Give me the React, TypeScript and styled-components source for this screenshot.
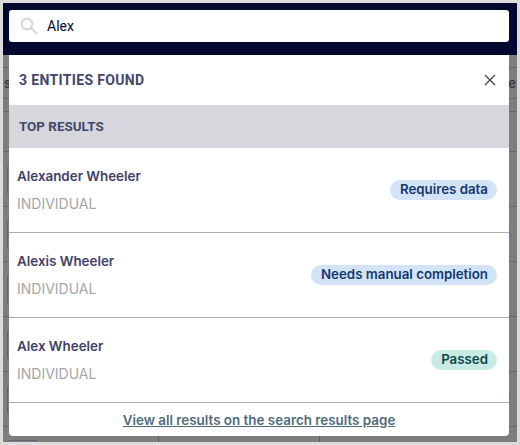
import React from 'react';
import styled, { createGlobalStyle } from 'styled-components';

type Tone = 'info' | 'success';

const results: { name: string; type: string; status: string; tone: Tone }[] = [
  { name: 'Alexander Wheeler', type: 'INDIVIDUAL', status: 'Requires data', tone: 'info' },
  { name: 'Alexis Wheeler', type: 'INDIVIDUAL', status: 'Needs manual completion', tone: 'info' },
  { name: 'Alex Wheeler', type: 'INDIVIDUAL', status: 'Passed', tone: 'success' },
];

// the table that sits dimmed behind the search panel
const tableRows: { height: number; text?: boolean; chip?: boolean; badge?: boolean }[] = [
  { height: 13 },
  { height: 31, text: true },
  { height: 13 },
  { height: 40 },
  { height: 55, chip: true },
  { height: 55, chip: true, badge: true },
  { height: 55, chip: true },
  { height: 55, chip: true },
  { height: 55, chip: true, badge: true },
  { height: 55, chip: true },
];

const SearchIcon = () => (
  <IconSvg width='18' height='18' viewBox='0 0 18 18' fill='none'>
    <circle cx='7' cy='7' r='5.4' stroke='#d6d8de' strokeWidth='2.2' />
    <path d='M11 11l6 6' stroke='#d6d8de' strokeWidth='2.4' />
  </IconSvg>
);

const CloseIcon = () => (
  <svg width='12' height='12' viewBox='0 0 12 12' fill='none'>
    <path d='M1 1l10 10M11 1L1 11' stroke='#444769' strokeWidth='1.4' />
  </svg>
);

export default function App() {
  return (
    <>
      <GlobalStyle />
      <Frame>
        <Screen>
          <TopGap />
          {tableRows.map((row, i) => (
            <TableRow key={i} $height={row.height}>
              {row.text && (
                <>
                  <GhostText>s</GhostText>
                  <GhostText>y e</GhostText>
                </>
              )}
              {row.chip && <GhostChip />}
              {row.badge && <GhostBadge />}
            </TableRow>
          ))}
          <BottomCells>
            <BottomDivider $width={155} />
            <BottomDivider $width={160} />
          </BottomCells>
          <Overlay>
            <SearchBar>
              <SearchBox>
                <SearchIcon />
                <SearchValue>Alex</SearchValue>
              </SearchBox>
            </SearchBar>
            <Panel>
              <PanelHeader>
                <HeaderTitle>3 ENTITIES FOUND</HeaderTitle>
                <CloseButton aria-label='Close'>
                  <CloseIcon />
                </CloseButton>
              </PanelHeader>
              <SectionTitle>TOP RESULTS</SectionTitle>
              {results.map((r) => (
                <ResultRow key={r.name}>
                  <ResultInfo>
                    <ResultName>{r.name}</ResultName>
                    <ResultType>{r.type}</ResultType>
                  </ResultInfo>
                  <Pill $tone={r.tone}>{r.status}</Pill>
                </ResultRow>
              ))}
              <PanelFooter>
                <FooterLink href='#'>View all results on the search results page</FooterLink>
              </PanelFooter>
            </Panel>
          </Overlay>
        </Screen>
      </Frame>
    </>
  );
}

const GlobalStyle = createGlobalStyle`
  html, body {
    margin: 0;
    padding: 0;
    background: #dcdcdc;
  }
  * {
    box-sizing: border-box;
  }
`;

const Frame = styled.div`
  width: 520px;
  height: 445px;
  padding: 3px;
  background: #dcdcdc;
  overflow: hidden;
`;

const Screen = styled.div`
  position: relative;
  width: 514px;
  height: 439px;
  background: #7e7e7e;
  overflow: hidden;
`;

const TopGap = styled.div`
  height: 52px;
`;

const TableRow = styled.div<{ $height: number }>`
  display: flex;
  justify-content: space-between;
  align-items: flex-start;
  height: ${(p) => p.$height}px;
  border-bottom: 1px solid #686868;
`;

const GhostText = styled.span`
  padding: 7px 1px 0;
  font-family: 'Inter', sans-serif;
  font-size: 13px;
  line-height: 16px;
  font-weight: 600;
  color: #3a3a3a;
`;

const GhostChip = styled.span`
  width: 31px;
  height: 30px;
  margin: 13px 0 0 4px;
  border: 1px solid #5f6270;
  border-radius: 3px;
`;

const GhostBadge = styled.span`
  width: 10px;
  height: 14px;
  margin: 20px 6px 0 0;
  border-radius: 7px;
  background: #6d7a92;
`;

const BottomCells = styled.div`
  position: absolute;
  left: 0;
  right: 0;
  bottom: 0;
  height: 7px;
  display: flex;
`;

const BottomDivider = styled.div<{ $width: number }>`
  width: ${(p) => p.$width + 1}px;
  border-right: 1px solid #5e5e5e;
`;

const Overlay = styled.div`
  position: absolute;
  inset: 0;
  display: flex;
  flex-direction: column;
  align-items: center;
`;

const SearchBar = styled.div`
  width: 100%;
  height: 52px;
  padding: 7px 8px 0 6px;
  background: #03082f;
`;

const SearchBox = styled.div`
  display: flex;
  align-items: center;
  gap: 9px;
  height: 32px;
  padding: 0 0 1px 11px;
  background: #fff;
  border-radius: 3px;
`;

const IconSvg = styled.svg`
  flex: none;
`;

const SearchValue = styled.span`
  font-family: 'Roboto', sans-serif;
  font-size: 14px;
  color: #050a30;
`;

const Panel = styled.div`
  width: 500px;
  margin: 0 2px 0 0;
  background: #fff;
  border-radius: 0 0 4px 4px;
  overflow: hidden;
`;

const PanelHeader = styled.div`
  display: flex;
  justify-content: space-between;
  align-items: center;
  height: 50px;
  padding: 0 13px 0 10px;
`;

const HeaderTitle = styled.h2`
  margin: 0;
  font-family: 'Roboto', sans-serif;
  font-size: 14px;
  font-weight: 700;
  letter-spacing: 0.35px;
  color: #444769;
`;

const CloseButton = styled.button`
  display: flex;
  padding: 0;
  border: 0;
  background: none;
`;

const SectionTitle = styled.div`
  display: flex;
  align-items: center;
  height: 43px;
  padding-left: 10px;
  background: #d6d7dc;
  font-family: 'Roboto', sans-serif;
  font-size: 13.4px;
  font-weight: 700;
  color: #444769;
`;

const ResultRow = styled.div`
  display: flex;
  justify-content: space-between;
  align-items: center;
  height: 85px;
  padding: 0 12px 0 8px;
  border-bottom: 1px solid #a9adb5;
`;

const ResultInfo = styled.div`
  display: flex;
  flex-direction: column;
  gap: 10px;
  padding-bottom: 1px;
`;

const ResultName = styled.span`
  font-family: 'Inter', sans-serif;
  font-size: 13.4px;
  font-weight: 600;
  line-height: 18px;
  color: #3f4266;
`;

const ResultType = styled.span`
  font-family: 'Inter', sans-serif;
  font-size: 14px;
  line-height: 18px;
  color: #a6a6a6;
`;

const Pill = styled.span<{ $tone: Tone }>`
  display: inline-flex;
  align-items: center;
  height: 20px;
  padding: 0 9px 2px 10px;
  border-radius: 10px;
  font-family: 'Inter', sans-serif;
  font-size: 13.3px;
  font-weight: 600;
  white-space: nowrap;
  background: ${(p) => (p.$tone === 'success' ? '#c9ebe6' : '#d3e3f8')};
  color: ${(p) => (p.$tone === 'success' ? '#0c4a4d' : '#153a6c')};
`;

const PanelFooter = styled.div`
  display: flex;
  justify-content: center;
  align-items: center;
  height: 33px;
`;

const FooterLink = styled.a`
  font-family: 'Inter', sans-serif;
  font-size: 13.4px;
  font-weight: 600;
  color: #4f6b7a;
  text-decoration: underline;
`;
